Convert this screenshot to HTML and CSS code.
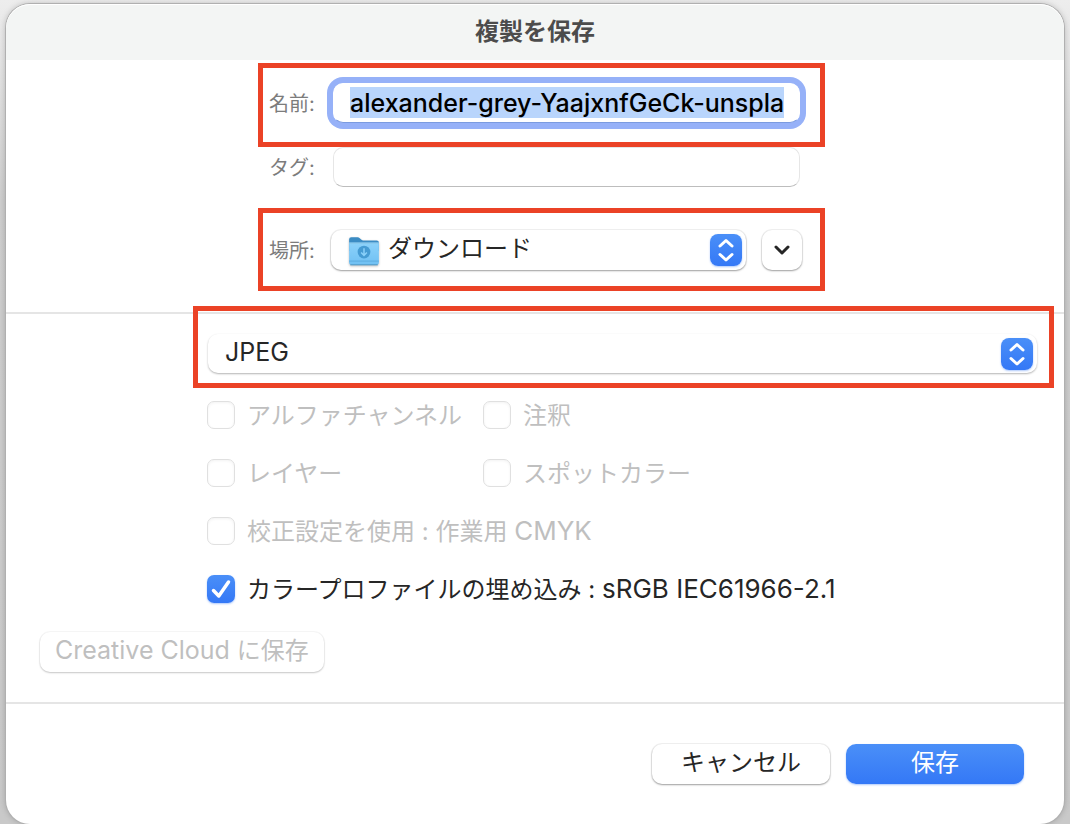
FILE: index.html
```html
<!DOCTYPE html>
<html lang="ja">
<head>
<meta charset="utf-8">
<meta name="viewport" content="width=device-width, initial-scale=1">
<title>複製を保存</title>
<link rel="stylesheet" href="styles.css">
</head>
<body>
<form class="dialog">
  <header class="titlebar"><h1 class="title">複製を保存</h1></header>

  <section class="destination">
    <div class="fields">
      <div class="field marked">
        <label class="field-label" for="name">名前:</label>
        <input class="text-input focused" id="name" type="text" value="alexander-grey-YaajxnfGeCk-unspla">
      </div>
      <div class="field">
        <label class="field-label" for="tags">タグ:</label>
        <input class="text-input" id="tags" type="text">
      </div>
      <div class="field place marked">
        <label class="field-label" for="place">場所:</label>
        <div class="popup">
          <select class="popup-select with-icon" id="place"><option>ダウンロード</option></select>
          <svg class="folder" viewBox="0 0 32 30" aria-hidden="true">
            <defs>
              <linearGradient id="folder-front" x1="0" y1="0" x2="0" y2="1">
                <stop offset="0" stop-color="#8bd1fa"/><stop offset="1" stop-color="#6fc0f3"/>
              </linearGradient>
            </defs>
            <path d="M2 4q0-2 2-2h6q1 0 2 1l1 1q1 1 2 1h13q2 0 2 2v8H2z" fill="#3b8cc4"/>
            <path d="M2 8h28v18q0 2-2 2H4q-2 0-2-2z" fill="url(#folder-front)"/>
            <path d="M2 7.500h28" stroke="#a8dffc"/>
            <path d="M2 24.500h28" stroke="#5dade0"/>
            <path d="M3 28h26" stroke="#4b98c9"/>
            <circle cx="16" cy="16" r="6" fill="#459bd3"/>
            <path d="M16 12.500v6.500M13.300 16.500 16 19.200l2.700-2.700" fill="none" stroke="#8bd1fa" stroke-width="1.400"/>
          </svg>
          <svg class="stepper" viewBox="0 0 32 32" aria-hidden="true"><path d="M10 12 16 6.500l6 5.500M10 20.500 16 26l6-5.500"/></svg>
        </div>
        <button class="button expand" type="button" aria-label="展開">
          <svg class="chevron" viewBox="0 0 16 10" aria-hidden="true"><path d="M2 2l6 6 6-6"/></svg>
        </button>
      </div>
    </div>
  </section>

  <section class="options">
    <div class="format marked">
      <div class="popup">
        <select class="popup-select" aria-label="フォーマット"><option>JPEG</option></select>
        <svg class="stepper" viewBox="0 0 32 32" aria-hidden="true"><path d="M10 12 16 6.500l6 5.500M10 20.500 16 26l6-5.500"/></svg>
      </div>
    </div>
    <div class="checks">
      <label class="check off"><input class="box" type="checkbox" disabled><span class="check-text">アルファチャンネル</span></label>
      <label class="check off"><input class="box" type="checkbox" disabled><span class="check-text">注釈</span></label>
      <label class="check off"><input class="box" type="checkbox" disabled><span class="check-text">レイヤー</span></label>
      <label class="check off"><input class="box" type="checkbox" disabled><span class="check-text">スポットカラー</span></label>
      <label class="check off wide"><input class="box" type="checkbox" disabled><span class="check-text">校正設定を使用 : 作業用 <span class="latin">CMYK</span></span></label>
      <label class="check wide">
        <span class="tick">
          <input class="box" type="checkbox" checked>
          <svg class="tick-mark" viewBox="0 0 28 28" aria-hidden="true"><path d="M6.500 15.500 11.800 21 21.500 7"/></svg>
        </span>
        <span class="check-text">カラープロファイルの埋め込み : <span class="latin">sRGB IEC61966-2.1</span></span>
      </label>
    </div>
    <button class="button cloud" type="button" disabled><span class="latin">Creative Cloud</span> に保存</button>
  </section>

  <footer class="actions">
    <button class="button action" type="button">キャンセル</button>
    <button class="button action primary" type="submit">保存</button>
  </footer>
</form>
</body>
</html>
```
FILE: styles.css
```css
* { box-sizing: border-box; }

body {
  margin: 0;
  padding: 4px 6px 0;
  background: linear-gradient(#ededed, #cecece 200px, #c9c9c9);
  color: #262626;
  font: 24px/36px Inter, "Noto Sans CJK JP", sans-serif;
}

.latin {
  font-size: 26px;
  line-height: 0;
}

.dialog {
  display: flex;
  flex-direction: column;
  min-height: calc(100vh - 4px);
  background: #fff;
  border-radius: 24px;
  box-shadow: 0 0 0 1px #b0b0b0, 0 0 6px #00000040;
  overflow: hidden;
}

.titlebar {
  padding: 10px 0;
  background: #f3f5f4;
  border-radius: 24px 24px 0 0;
  box-shadow: inset 0 1px #fff;
  text-align: center;
}

.title {
  margin: 0;
  color: #4c4c4c;
  font-size: 24px;
  font-weight: 700;
}

.destination {
  padding: 23px 20px 42px 21px;
  border-bottom: 2px solid #e5e5e5;
}

.fields {
  display: flex;
  flex-direction: column;
  gap: 24px;
  max-width: 533px;
  margin: 0 auto;
}

.field {
  display: flex;
  align-items: center;
  gap: 16px;
}

.place { margin-top: 19px; }

.field-label {
  flex: none;
  width: 46px;
  padding-top: 2px;
  color: #7c7c7c;
  font-size: 20px;
  white-space: nowrap;
}

.text-input {
  flex: 1;
  min-width: 0;
  height: 40px;
  margin: 0 2px;
  padding: 0 16px;
  background: #fff;
  border: 1px solid #e6e6e6;
  border-bottom-color: #bdbdbd;
  border-radius: 10px;
  outline: none;
  color: #000;
  font: 500 25px/32px Inter, "Noto Sans CJK JP", sans-serif;
}

.focused {
  padding: 3px 15px 4px 16px;
  background: linear-gradient(#b9d5fc, #b9d5fc) content-box, #fff;
  border-color: #fff #fff #7b9be0;
  box-shadow: 0 0 0 6px #96b1f8;
}

.marked { position: relative; }

.marked::after {
  content: "";
  position: absolute;
  inset: -20px -23px -24px -11px;
  border: 5px solid #eb4226;
  pointer-events: none;
}

.place::after { inset: -22px -23px -21px -11px; }
.format::after { inset: -28px -17px -15px -15px; }

.popup {
  position: relative;
  flex: 1;
  min-width: 0;
}

.popup-select {
  display: block;
  width: 100%;
  height: 40px;
  padding: 0 48px 3px 17px;
  appearance: none;
  background: #fff;
  border: 0;
  border-radius: 10px;
  box-shadow: 0 0 0 1px #0000000d, 0 1px 2px #00000059;
  color: #262626;
  font-family: inherit;
  font-size: 24px;
}

.with-icon { padding-left: 57px; }

.format .popup-select {
  height: 39px;
  box-shadow: 0 1px 2px #0000004d;
  font-size: 25px;
}

.folder {
  position: absolute;
  left: 16px;
  top: 5px;
  width: 34px;
  height: 32px;
  filter: drop-shadow(0 1px 1px #00000040);
  pointer-events: none;
}

.stepper {
  position: absolute;
  right: 4px;
  top: 4px;
  width: 32px;
  height: 32px;
  background: linear-gradient(#4a8ff8, #3478f6);
  border-radius: 8px;
  box-shadow: 0 1px 2px #3478f666;
  fill: none;
  stroke: #fff;
  stroke-width: 3;
  stroke-linecap: round;
  stroke-linejoin: round;
  pointer-events: none;
}

.button {
  height: 40px;
  padding: 0 15px 2px;
  background: #fff;
  border: 0;
  border-radius: 10px;
  box-shadow: 0 0 0 1px #0000000d, 0 1px 2px #00000059;
  color: #262626;
  font: 24px/36px Inter, "Noto Sans CJK JP", sans-serif;
  white-space: nowrap;
}

.expand {
  display: flex;
  flex: none;
  align-items: center;
  justify-content: center;
  width: 40px;
  padding: 0;
}

.chevron {
  width: 16px;
  height: 10px;
  fill: none;
  stroke: #262626;
  stroke-width: 3;
  stroke-linecap: round;
  stroke-linejoin: round;
}

.options {
  padding: 20px 27px 30px 34px;
  border-bottom: 2px solid #e5e5e5;
}

.format { margin-left: 168px; }

.checks {
  display: grid;
  grid-template-columns: 276px 1fr;
  row-gap: 22px;
  margin: 24px 0 25px 167px;
}

.check {
  display: flex;
  align-items: center;
  gap: 12px;
  white-space: nowrap;
}

.check-text {
  padding-top: 2px;
  line-height: 34px;
}

.wide { grid-column: 1 / -1; }
.off { color: #bfbfbf; }

.box {
  display: block;
  flex: none;
  width: 28px;
  height: 28px;
  margin: 0;
  appearance: none;
  background: #fff;
  border: 1px solid #e0e0e0;
  border-radius: 7px;
  box-shadow: inset 0 1px 3px #0000000d;
}

.box:checked {
  background: linear-gradient(#4a8ff8, #3478f6);
  border: 0;
  box-shadow: 0 1px 2px #3478f666;
}

.tick { position: relative; }

.tick-mark {
  position: absolute;
  inset: 0;
  fill: none;
  stroke: #fff;
  stroke-width: 3.500;
  stroke-linecap: round;
  stroke-linejoin: round;
  pointer-events: none;
}

.cloud {
  display: block;
  box-shadow: 0 0 0 1px #00000008, 0 1px 2px #00000033;
  color: #bfbfbf;
}

.cloud .latin { font-size: 25px; }

.actions {
  display: flex;
  justify-content: flex-end;
  gap: 16px;
  padding: 40px 40px;
}

.action { width: 178px; }

.primary {
  background: linear-gradient(#4a8ff8, #3478f6);
  box-shadow: 0 1px 2px #3478f666;
  color: #fff;
}
```
